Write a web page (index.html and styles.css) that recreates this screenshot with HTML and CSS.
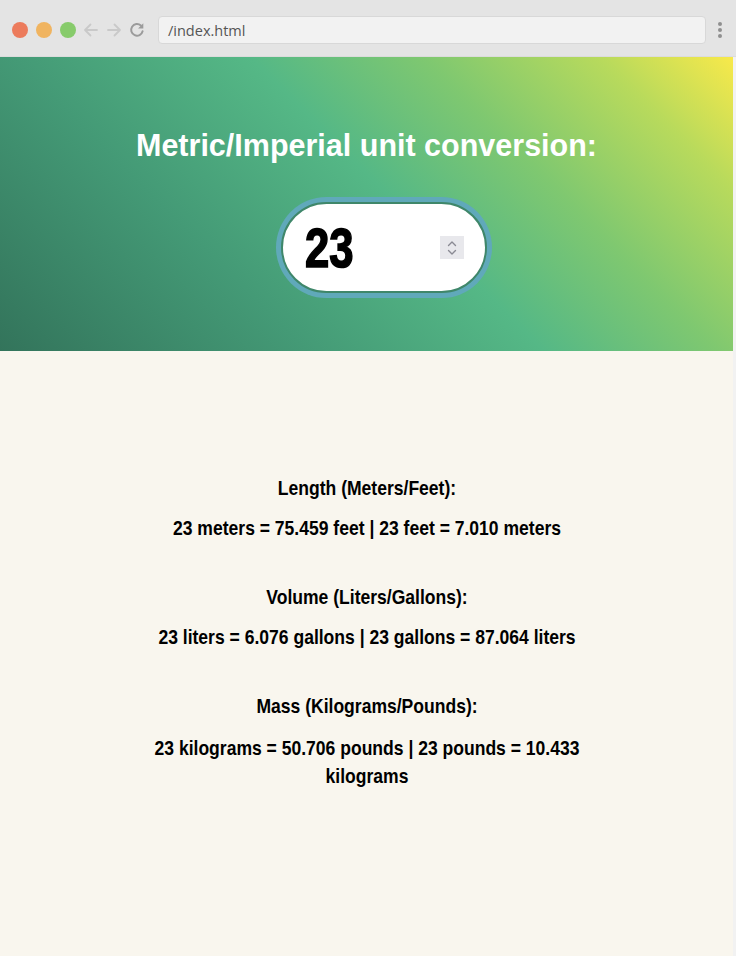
FILE: index.html
```html
<!DOCTYPE html>
<html lang="en">
<head>
<meta charset="utf-8">
<title>Unit conversion</title>
<link rel="stylesheet" href="styles.css">
</head>
<body>
<div class="window">
  <header class="chrome">
    <div class="lights">
      <span class="light red"></span>
      <span class="light yellow"></span>
      <span class="light green"></span>
    </div>
    <div class="navs">
      <svg class="nav" width="18" height="18" viewBox="0 0 18 18"><path d="M15 9H3M8.5 3.5L3 9l5.5 5.5" fill="none" stroke="#c9c9c9" stroke-width="1.8" stroke-linecap="round" stroke-linejoin="round"/></svg>
      <svg class="nav" width="18" height="18" viewBox="0 0 18 18"><path d="M3 9h12M9.5 3.5L15 9l-5.5 5.5" fill="none" stroke="#c9c9c9" stroke-width="1.8" stroke-linecap="round" stroke-linejoin="round"/></svg>
      <svg class="nav" width="18" height="18" viewBox="0 0 18 18"><path d="M14.6 10.2A5.8 5.8 0 1 1 12.9 4.6" fill="none" stroke="#9b9b9b" stroke-width="2" stroke-linecap="round"/><path d="M15.3 2.3v5.2h-5.2z" fill="#9b9b9b"/></svg>
    </div>
    <div class="url">/index.html</div>
    <div class="kebab"><i></i><i></i><i></i></div>
  </header>
  <main class="page">
    <section class="hero">
      <h1 class="title">Metric/Imperial unit conversion:</h1>
      <label class="pill">
        <input class="num" type="number" value="23">
        <span class="spin">
          <svg width="12" height="20" viewBox="0 0 12 20"><path d="M2.5 7.5L6 4l3.5 3.5M2.5 12.5L6 16l3.5-3.5" fill="none" stroke="#8a8a93" stroke-width="1.4" stroke-linecap="round" stroke-linejoin="round"/></svg>
        </span>
      </label>
    </section>
    <section class="results">
      <div class="group">
        <h2 class="head">Length (Meters/Feet):</h2>
        <p class="value">23 meters = 75.459 feet | 23 feet = 7.010 meters</p>
      </div>
      <div class="group">
        <h2 class="head">Volume (Liters/Gallons):</h2>
        <p class="value">23 liters = 6.076 gallons | 23 gallons = 87.064 liters</p>
      </div>
      <div class="group">
        <h2 class="head">Mass (Kilograms/Pounds):</h2>
        <p class="value">23 kilograms = 50.706 pounds | 23 pounds = 10.433 kilograms</p>
      </div>
    </section>
  </main>
</div>
</body>
</html>
```
FILE: styles.css
```css
* { box-sizing: border-box; }
html, body { margin: 0; padding: 0; }
body {
  width: 736px;
  height: 956px;
  overflow: hidden;
  background: #f2f2f2;
  font-family: "Liberation Sans", Arial, sans-serif;
}
.window {
  display: flex;
  flex-direction: column;
  height: 956px;
}
.chrome {
  height: 57px;
  background: #e4e4e4;
  display: flex;
  align-items: center;
  padding: 4px 0 0 12px;
  border-bottom: 1px solid #dcdcdc;
}
.lights { display: flex; gap: 8px; }
.light { width: 16px; height: 16px; border-radius: 50%; display: block; }
.red { background: #ec7b5c; }
.yellow { background: #f0b460; }
.green { background: #87cb6b; }
.navs { display: flex; gap: 5px; margin-left: 6px; }
.nav { display: block; }
.url {
  margin-left: 12px;
  width: 548px;
  height: 28px;
  background: #f2f2f2;
  border: 1px solid #d8d8d8;
  border-radius: 4px;
  display: flex;
  align-items: center;
  padding-left: 9px;
  font-family: "Open Sans", "DejaVu Sans", sans-serif;
  font-size: 14.5px;
  color: #555;
}
.kebab {
  margin-left: 12px;
  display: flex;
  flex-direction: column;
  gap: 2px;
}
.kebab i { width: 4px; height: 4px; border-radius: 50%; background: #8f8f8f; display: block; }
.page {
  flex: 1;
  width: 733px;
  background: #f9f6ee;
  display: flex;
  flex-direction: column;
}
.hero {
  height: 294px;
  background: linear-gradient(45deg, #33745b 0%, #449a76 30%, #55b886 53%, #7fc870 70%, #b8da5c 87%, #f8e94a 100%);
  display: flex;
  flex-direction: column;
  align-items: center;
  padding-top: 71px;
}
.title {
  margin: 0;
  color: #fff;
  font-size: 30.5px;
  line-height: 34px;
  font-weight: 700;
}
.pill {
  margin-top: 40px;
  margin-left: 35px;
  width: 206px;
  height: 91px;
  background: #fff;
  border: 2px solid #3f876a;
  border-radius: 46px;
  box-shadow: 0 0 0 5px #60a9ba;
  display: flex;
  align-items: center;
  padding: 0 21px 0 22px;
}
.num {
  flex: 1;
  min-width: 0;
  border: 0;
  outline: none;
  background: transparent;
  font-family: "Liberation Sans", Arial, sans-serif;
  font-weight: 700;
  font-size: 56px;
  color: #000;
  padding: 0;
  -webkit-text-stroke: 1.6px #000;
  transform: scaleX(0.78);
  transform-origin: left center;
  -moz-appearance: textfield;
}
.num::-webkit-inner-spin-button,
.num::-webkit-outer-spin-button { -webkit-appearance: none; margin: 0; }
.spin {
  width: 24px;
  height: 23px;
  background: #e8e8ec;
  display: flex;
  align-items: center;
  justify-content: center;
}
.results {
  padding-top: 124px;
  width: 560px;
  align-self: center;
  transform: scaleX(0.835);
  display: flex;
  flex-direction: column;
  gap: 42px;
  text-align: center;
  font-family: "Liberation Sans", Arial, sans-serif;
  font-weight: 700;
  color: #000;
}
.group { display: flex; flex-direction: column; gap: 14px; }
.group:last-child { gap: 16px; }
.head {
  margin: 0;
  font-size: 21px;
  line-height: 25px;
  font-weight: 700;
}
.value {
  margin: 0;
  font-size: 21px;
  line-height: 28px;
}
```
